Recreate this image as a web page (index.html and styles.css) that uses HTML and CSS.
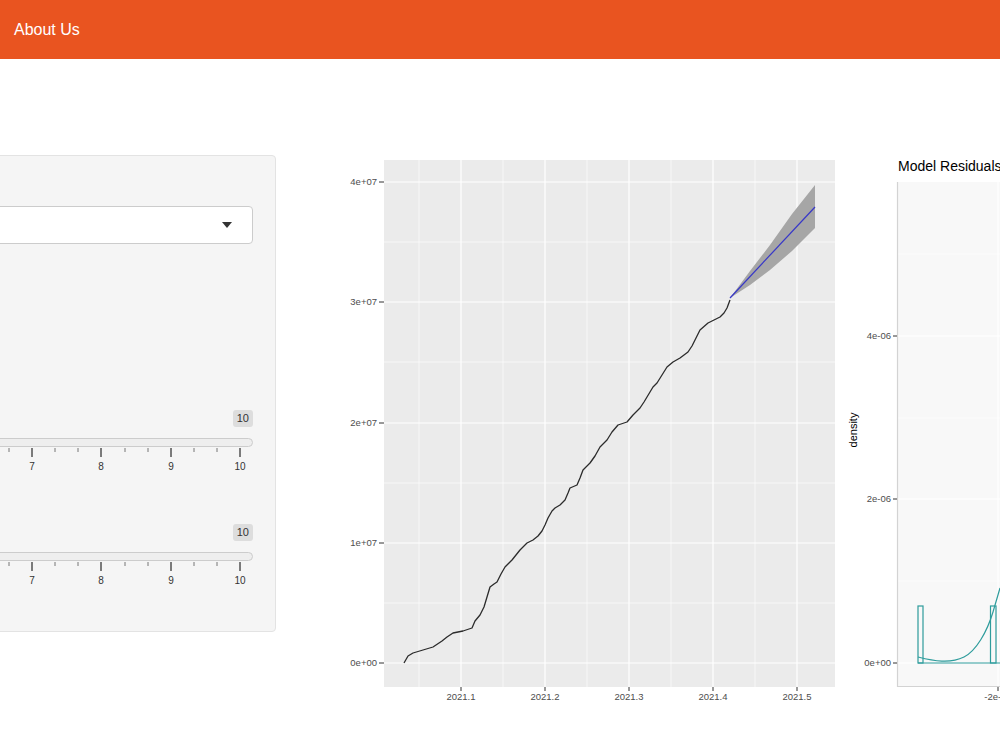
FILE: index.html
```html
<!DOCTYPE html>
<html lang="en">

<head>
    <meta charset="UTF-8">
    <meta name="viewport" content="width=device-width, initial-scale=1.0">
    <title>Forecast</title>
    <link rel="stylesheet" href="styles.css">
</head>

<body>
    <nav class="navbar">
        <a class="nav-link" href="#">About Us</a>
    </nav>

    <main class="content">
        <aside class="well">
            <div class="select-box">
                <span class="caret"></span>
            </div>

            <div class="slider slider-first">
                <div class="slider-value"><span class="badge">10</span></div>
                <div class="slider-track"></div>
                <svg class="slider-grid" width="544" height="30" viewBox="0 0 544 30">
                    <g class="minor">
                        <line x1="300" y1="1" x2="300" y2="5" />
                        <line x1="346" y1="1" x2="346" y2="5" />
                        <line x1="369" y1="1" x2="369" y2="5" />
                        <line x1="416" y1="1" x2="416" y2="5" />
                        <line x1="439" y1="1" x2="439" y2="5" />
                        <line x1="485" y1="1" x2="485" y2="5" />
                        <line x1="508" y1="1" x2="508" y2="5" />
                    </g>
                    <g class="major">
                        <line x1="323" y1="1" x2="323" y2="10" />
                        <line x1="392" y1="1" x2="392" y2="10" />
                        <line x1="462" y1="1" x2="462" y2="10" />
                        <line x1="531" y1="1" x2="531" y2="10" />
                    </g>
                    <g class="labels">
                        <text x="323" y="23">7</text>
                        <text x="392" y="23">8</text>
                        <text x="462" y="23">9</text>
                        <text x="531" y="23">10</text>
                    </g>
                </svg>
            </div>

            <div class="slider slider-second">
                <div class="slider-value"><span class="badge">10</span></div>
                <div class="slider-track"></div>
                <svg class="slider-grid" width="544" height="30" viewBox="0 0 544 30">
                    <g class="minor">
                        <line x1="300" y1="1" x2="300" y2="5" />
                        <line x1="346" y1="1" x2="346" y2="5" />
                        <line x1="369" y1="1" x2="369" y2="5" />
                        <line x1="416" y1="1" x2="416" y2="5" />
                        <line x1="439" y1="1" x2="439" y2="5" />
                        <line x1="485" y1="1" x2="485" y2="5" />
                        <line x1="508" y1="1" x2="508" y2="5" />
                    </g>
                    <g class="major">
                        <line x1="323" y1="1" x2="323" y2="10" />
                        <line x1="392" y1="1" x2="392" y2="10" />
                        <line x1="462" y1="1" x2="462" y2="10" />
                        <line x1="531" y1="1" x2="531" y2="10" />
                    </g>
                    <g class="labels">
                        <text x="323" y="23">7</text>
                        <text x="392" y="23">8</text>
                        <text x="462" y="23">9</text>
                        <text x="531" y="23">10</text>
                    </g>
                </svg>
            </div>
        </aside>

        <!-- forecast plot, drawn in page coordinates -->
        <svg class="plot plot-forecast" width="520" height="560" viewBox="320 150 520 560">
            <rect class="panel" x="384" y="160" width="451" height="527" />
            <g class="grid-minor">
                <line x1="419" y1="160" x2="419" y2="687" />
                <line x1="503" y1="160" x2="503" y2="687" />
                <line x1="587" y1="160" x2="587" y2="687" />
                <line x1="671" y1="160" x2="671" y2="687" />
                <line x1="755" y1="160" x2="755" y2="687" />
                <line x1="384" y1="242" x2="835" y2="242" />
                <line x1="384" y1="362" x2="835" y2="362" />
                <line x1="384" y1="483" x2="835" y2="483" />
                <line x1="384" y1="603" x2="835" y2="603" />
            </g>
            <g class="grid-major">
                <line x1="461" y1="160" x2="461" y2="687" />
                <line x1="545" y1="160" x2="545" y2="687" />
                <line x1="629" y1="160" x2="629" y2="687" />
                <line x1="713" y1="160" x2="713" y2="687" />
                <line x1="797" y1="160" x2="797" y2="687" />
                <line x1="384" y1="182" x2="835" y2="182" />
                <line x1="384" y1="302" x2="835" y2="302" />
                <line x1="384" y1="423" x2="835" y2="423" />
                <line x1="384" y1="543" x2="835" y2="543" />
                <line x1="384" y1="663" x2="835" y2="663" />
            </g>

            <polygon class="band" points="730,298 750,271 770,245 792,214 815,185 815,228 792,251 770,270 750,285" />
            <line class="fit" x1="730" y1="298" x2="815" y2="207" />
            <polyline class="series" points="404,663 408,656 413,653 423,650 433,647 442,641 447,637 453,633 463,631 472,628 475,621 480,615 484,607 487,597 490,587 494,584 497,582 501,574 505,567 512,560 516,555 520,550 527,543 533,540 538,536 542,531 545,525 548,518 552,511 555,508 560,505 565,500 568,493 570,488 577,485 580,478 583,470 590,463 595,456 600,447 607,440 612,432 618,425 627,422 633,415 640,408 644,402 647,397 653,387 657,383 662,375 667,367 673,362 680,358 688,352 692,346 695,340 700,330 708,323 714,320 720,317 724,313 727,308 730,300" />

            <g class="ticks">
                <line x1="379" y1="182" x2="384" y2="182" />
                <line x1="379" y1="302" x2="384" y2="302" />
                <line x1="379" y1="423" x2="384" y2="423" />
                <line x1="379" y1="543" x2="384" y2="543" />
                <line x1="379" y1="663" x2="384" y2="663" />
                <line x1="461" y1="687" x2="461" y2="691" />
                <line x1="545" y1="687" x2="545" y2="691" />
                <line x1="629" y1="687" x2="629" y2="691" />
                <line x1="713" y1="687" x2="713" y2="691" />
                <line x1="797" y1="687" x2="797" y2="691" />
            </g>
            <g class="axis-y">
                <text x="377" y="185">4e+07</text>
                <text x="377" y="305">3e+07</text>
                <text x="377" y="426">2e+07</text>
                <text x="377" y="546">1e+07</text>
                <text x="377" y="666">0e+00</text>
            </g>
            <g class="axis-x">
                <text x="461" y="700">2021.1</text>
                <text x="545" y="700">2021.2</text>
                <text x="629" y="700">2021.3</text>
                <text x="713" y="700">2021.4</text>
                <text x="797" y="700">2021.5</text>
            </g>
        </svg>

        <!-- residual density plot -->
        <svg class="plot plot-residuals" width="160" height="560" viewBox="840 150 160 560">
            <text class="plot-title" x="898" y="171">Model Residuals</text>
            <rect class="panel-light" x="897" y="182" width="200" height="505" />
            <g class="grid-minor">
                <line x1="897" y1="254" x2="1000" y2="254" />
                <line x1="897" y1="418" x2="1000" y2="418" />
                <line x1="897" y1="581" x2="1000" y2="581" />
            </g>
            <g class="grid-major">
                <line x1="897" y1="336" x2="1000" y2="336" />
                <line x1="897" y1="499" x2="1000" y2="499" />
                <line x1="897" y1="663" x2="1000" y2="663" />
                <line x1="998" y1="182" x2="998" y2="687" />
            </g>
            <g class="axis-line">
                <line x1="897.5" y1="182" x2="897.5" y2="687" />
                <line x1="897" y1="686.5" x2="1000" y2="686.5" />
            </g>

            <g class="hist">
                <line x1="918" y1="663" x2="1000" y2="663" />
                <rect x="918" y="606" width="5" height="57" />
                <rect x="990.5" y="606" width="5.5" height="57" />
                <path d="M918,657 C934,661 950,664 964,657 C976,651 987,632 993,612 L1000,588" />
            </g>

            <g class="ticks">
                <line x1="893" y1="336" x2="897" y2="336" />
                <line x1="893" y1="499" x2="897" y2="499" />
                <line x1="893" y1="663" x2="897" y2="663" />
                <line x1="998" y1="687" x2="998" y2="691" />
            </g>
            <g class="axis-y">
                <text x="891" y="339">4e-06</text>
                <text x="891" y="502">2e-06</text>
                <text x="891" y="666">0e+00</text>
            </g>
            <g class="axis-x">
                <text x="998" y="700">-2e-05</text>
            </g>
            <text class="axis-title" x="857" y="430" transform="rotate(-90 857 430)">density</text>
        </svg>
    </main>
</body>

</html>
```

FILE: styles.css
```css
html,
body {
    margin: 0;
    overflow: hidden;
}

body {
    font-family: "Liberation Sans", Arial, sans-serif;
    color: #333333;
    background-color: #ffffff;
}

.navbar {
    height: 59px;
    background-color: #e95420;
    display: flex;
    align-items: center;
}

.nav-link {
    padding: 0 14px;
    color: #ffffff;
    font-size: 16px;
    text-decoration: none;
}

.content {
    display: flex;
    align-items: flex-start;
    padding-top: 91px;
}

/* sidebar panel, scrolled partly out of view */
.well {
    flex: none;
    width: 544px;
    margin-top: 5px;
    margin-left: -312px;
    margin-right: 44px;
    padding: 19px 22px 19px 20px;
    background-color: #f5f5f5;
    border: 1px solid #e3e3e3;
    border-radius: 4px;
}

.select-box {
    box-sizing: border-box;
    height: 38px;
    margin-top: 31px;
    padding-right: 20px;
    display: flex;
    align-items: center;
    justify-content: flex-end;
    background-color: #ffffff;
    border: 1px solid #cccccc;
    border-radius: 4px;
}

.caret {
    width: 0;
    height: 0;
    border-left: 5px solid transparent;
    border-right: 5px solid transparent;
    border-top: 6px solid #333333;
}

.slider-first {
    margin-top: 166px;
}

.slider-second {
    margin-top: 47px;
    margin-bottom: 21px;
}

.slider-value {
    display: flex;
    justify-content: flex-end;
}

.badge {
    height: 17px;
    line-height: 17px;
    padding: 0 4px;
    font-size: 11px;
    color: #333333;
    background-color: #dddddd;
    border-radius: 3px;
}

.slider-track {
    box-sizing: border-box;
    height: 9px;
    margin-top: 11px;
    background-color: #eeeeee;
    border: 1px solid #cccccc;
    border-radius: 5px;
}

.slider-grid {
    display: block;
}

.slider-grid line {
    stroke: #000000;
    stroke-width: 1;
}

.slider-grid .minor line {
    stroke: #777777;
}

.slider-grid text {
    font-size: 10px;
    fill: #333333;
    text-anchor: middle;
}

/* ggplot output */
.plot {
    flex: none;
    display: block;
    font-family: "Liberation Sans", Arial, sans-serif;
}

.panel {
    fill: #ebebeb;
}

.panel-light {
    fill: #f8f8f8;
}

.grid-minor line {
    stroke: #ffffff;
    stroke-width: 0.6;
}

.grid-major line {
    stroke: #ffffff;
    stroke-width: 1.2;
}

.band {
    fill: #a6a6a6;
}

.fit {
    stroke: #3737c8;
    stroke-width: 1.2;
}

.series {
    fill: none;
    stroke: #2b2b2b;
    stroke-width: 1.3;
    stroke-linejoin: round;
}

.ticks line {
    stroke: #333333;
    stroke-width: 1;
}

.axis-y text {
    font-size: 9.5px;
    fill: #4d4d4d;
    text-anchor: end;
}

.axis-x text {
    font-size: 9.5px;
    fill: #4d4d4d;
    text-anchor: middle;
}

.axis-line line {
    stroke: #d3d3d3;
    stroke-width: 1.2;
}

.plot-title {
    font-size: 14px;
    fill: #000000;
}

.axis-title {
    font-size: 11px;
    fill: #000000;
    text-anchor: middle;
}

.hist rect,
.hist line,
.hist path {
    fill: none;
    stroke: #2e9c9c;
    stroke-width: 1.2;
}
```
